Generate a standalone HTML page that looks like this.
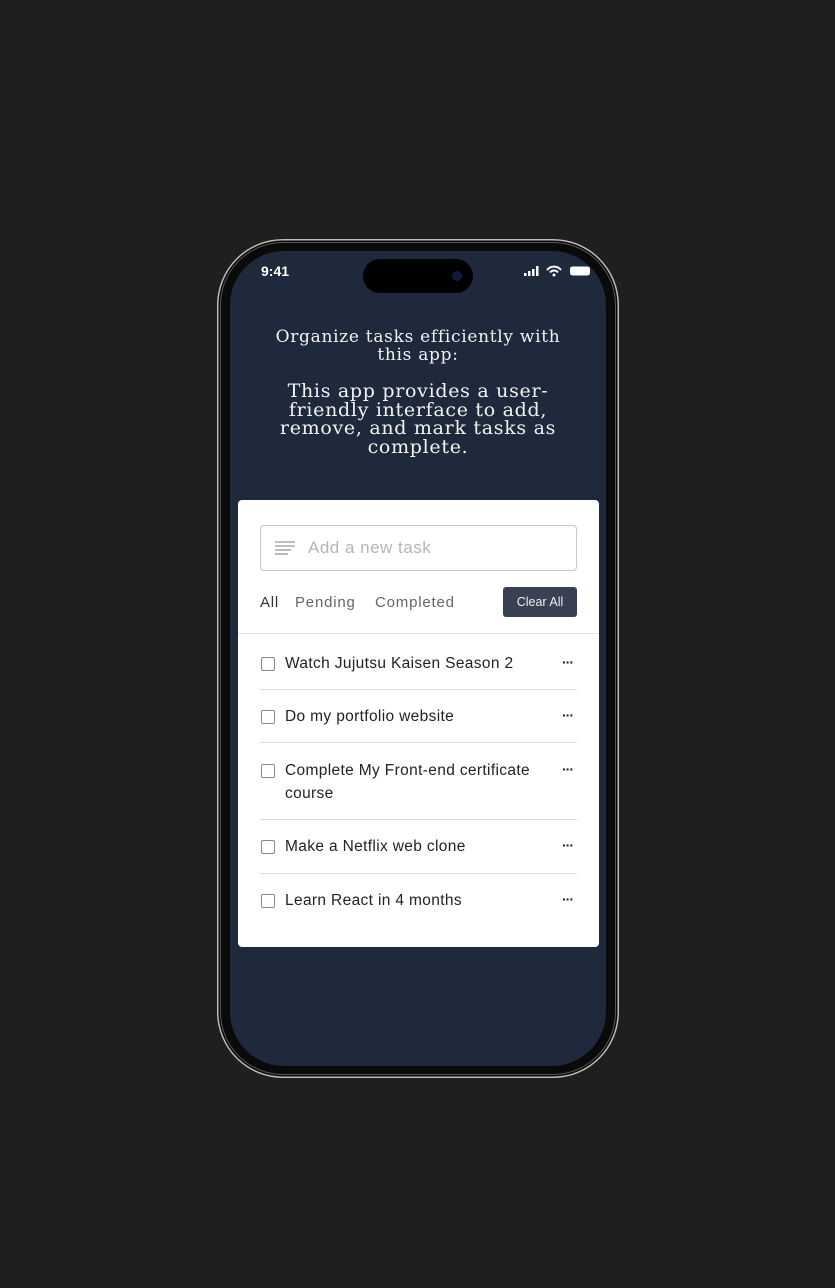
<!DOCTYPE html>
<html><head><style>
body{margin:0;width:835px;height:1288px;background:#1f1f1f;position:relative;overflow:hidden;font-family:"Liberation Sans",sans-serif}
.frame{position:absolute;left:217px;top:239px;width:402px;height:839px;border-radius:66px;background:#0a0a0a;box-shadow:0 0 0 1.5px #bdbdbd inset;}
.frame:before{content:"";position:absolute;left:3px;top:3px;right:3px;bottom:3px;border-radius:63px;border:1px solid #555;}
.screen{position:absolute;left:230px;top:251px;width:376px;height:815px;border-radius:54px;background:#1e293b;overflow:hidden}
.island{position:absolute;left:363px;top:259px;width:110px;height:34px;border-radius:17px;background:#000}
.cam{position:absolute;left:452px;top:271px;width:10px;height:10px;border-radius:5px;background:#141a3a}
.time{position:absolute;left:261px;top:263px;color:#fff;font-size:14px;font-weight:bold}
.h{position:absolute;left:240px;width:356px;text-align:center;color:#f2f2f2;font-family:"DejaVu Serif","Liberation Serif",serif;letter-spacing:0.7px}
.card{position:absolute;left:238px;top:500px;width:361px;height:447px;background:#fff;border-radius:4px}
.input{position:absolute;left:22px;top:25px;width:315px;height:44px;border:1px solid #c8c8c8;border-radius:4px}
.input span{position:absolute;left:47px;top:12px;font-size:17px;color:#b5b5b5;letter-spacing:0.5px}
.f{position:absolute;top:94px;font-size:15px;color:#666;letter-spacing:0.8px}
.btn{position:absolute;left:265px;top:87px;width:74px;height:30px;background:#394152;border-radius:3px;color:#eee;font-size:12.5px;text-align:center;line-height:30px}
.div{position:absolute;left:0;right:0;top:133px;height:1px;background:#e3e3e3}
.row{position:absolute;left:22px;width:317px;font-size:15.5px;color:#222;letter-spacing:0.35px}
.row .cb{position:absolute;left:1px;top:5px;width:12px;height:12px;border:1px solid #888;border-radius:2px}
.row .t{position:absolute;left:25px;top:0;line-height:23px;width:270px}
.row .d{position:absolute;right:4px;top:2px;font-weight:bold;letter-spacing:-1px;font-size:14px}
.sep{position:absolute;left:22px;width:317px;height:1px;background:#ddd}
</style></head><body>
<div class="frame"></div>
<div class="screen"></div>
<div class="island"></div><div class="cam"></div>
<div class="time">9:41</div>
<svg style="position:absolute;left:523px;top:265px" width="70" height="12"><rect x="1" y="8" width="2.5" height="3" fill="#fff"/><rect x="5" y="6" width="2.5" height="5" fill="#fff"/><rect x="9" y="4" width="2.5" height="7" fill="#fff"/><rect x="13" y="1" width="2.5" height="10" fill="#fff"/><path d="M24 5 A9 9 0 0 1 38 5 M27 7.5 A5 5 0 0 1 35 7.5" stroke="#fff" stroke-width="2" fill="none"/><circle cx="31" cy="10" r="1.5" fill="#fff"/><rect x="47" y="1.5" width="20" height="9" rx="2.5" fill="#fff"/></svg>
<div class="h" style="top:328px;font-size:17px;line-height:18px">Organize tasks efficiently with<br>this app:</div>
<div class="h" style="top:382px;font-size:19px;line-height:18.5px">This app provides a user-<br>friendly interface to add,<br>remove, and mark tasks as<br>complete.</div>
<div class="card">
<div class="input"><svg style="position:absolute;left:14px;top:15px" width="22" height="14"><g stroke="#aaa" stroke-width="1.6"><line x1="0" y1="1" x2="20" y2="1"/><line x1="0" y1="5" x2="20" y2="5"/><line x1="0" y1="9" x2="16" y2="9"/><line x1="0" y1="13" x2="13" y2="13"/></g></svg><span>Add a new task</span></div>
<div class="f" style="left:22px;color:#333">All</div>
<div class="f" style="left:57px">Pending</div>
<div class="f" style="left:137px">Completed</div>
<div class="btn">Clear All</div>
<div class="div"></div>
<div class="row" style="top:152px"><div class="cb"></div><div class="t">Watch Jujutsu Kaisen Season 2</div><div class="d">···</div></div>
<div class="sep" style="top:189px"></div>
<div class="row" style="top:205px"><div class="cb"></div><div class="t">Do my portfolio website</div><div class="d">···</div></div>
<div class="sep" style="top:242px"></div>
<div class="row" style="top:259px"><div class="cb"></div><div class="t">Complete My Front-end certificate course</div><div class="d">···</div></div>
<div class="sep" style="top:319px"></div>
<div class="row" style="top:335px"><div class="cb"></div><div class="t">Make a Netflix web clone</div><div class="d">···</div></div>
<div class="sep" style="top:373px"></div>
<div class="row" style="top:389px"><div class="cb"></div><div class="t">Learn React in 4 months</div><div class="d">···</div></div>
</div>
</body></html>
